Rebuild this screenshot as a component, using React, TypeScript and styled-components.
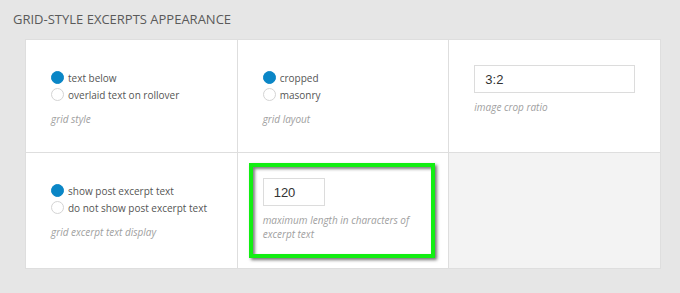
import React from "react";
import styled, { createGlobalStyle } from "styled-components";

const Global = createGlobalStyle`
  html, body { margin: 0; padding: 0; background: #e6e6e6; }
  body { font-family: "Open Sans", "Liberation Sans", sans-serif; }
  * { box-sizing: border-box; }
`;

const Page = styled.div`
  width: 680px;
  height: 293px;
  background: #e6e6e6;
  padding: 11px 0 0 0;
`;

const Title = styled.h2`
  margin: 0 0 0 13px;
  font-size: 13px;
  line-height: 17px;
  font-weight: 400;
  color: #5a5a5a;
  text-transform: uppercase;
`;

const Grid = styled.div`
  margin: 11px 0 0 25px;
  width: 636px;
  display: grid;
  grid-template-columns: repeat(3, minmax(0, 1fr));
  grid-template-rows: 112px 115px;
  gap: 1px;
  background: #dedede;
  border: 1px solid #dedede;
`;

const Cell = styled.div<{ $empty?: boolean }>`
  position: relative;
  background: ${(p) => (p.$empty ? "#f3f3f3" : "#fff")};
  padding: 25px 25px 0 25px;
  display: flex;
  flex-direction: column;
`;

const RadioGroup = styled.div`
  padding-top: 4px;
  display: flex;
  flex-direction: column;
`;

const RadioRow = styled.label`
  display: flex;
  align-items: center;
  gap: 4px;
  height: 17px;
  font-size: 10px;
  color: #555;
  white-space: nowrap;
`;

const Dot = styled.span<{ $on?: boolean }>`
  width: 13px;
  height: 13px;
  border-radius: 50%;
  flex: none;
  background: ${(p) => (p.$on ? "#0a86c6" : "#fff")};
  border: 1px solid ${(p) => (p.$on ? "#0a86c6" : "#d4d4d4")};
`;

const Hint = styled.div<{ $gap: number }>`
  margin-top: ${(p) => p.$gap}px;
  font-size: 10px;
  line-height: 14px;
  font-style: italic;
  color: #a0a0a0;
`;

const TextInput = styled.div<{ $w?: number }>`
  width: ${(p) => (p.$w ? `${p.$w}px` : "100%")};
  height: 28px;
  border: 1px solid #dcdcdc;
  background: #fff;
  padding: 0 10px;
  display: flex;
  align-items: center;
  font-family: "Liberation Sans", Arial, sans-serif;
  font-size: 13px;
  color: #333;
`;

const Highlight = styled.div`
  position: absolute;
  left: 11px;
  top: 10px;
  right: 13px;
  bottom: 10px;
  border: 4px solid #12ee12;
  box-shadow: 2px 2px 3px rgba(0, 0, 0, 0.55), inset 2px 2px 3px rgba(0, 0, 0, 0.5);
  pointer-events: none;
`;

const Radios = ({ options, label }: { options: string[]; label: string }) => (
  <>
    <RadioGroup>
      {options.map((o, i) => (
        <RadioRow key={o}>
          <Dot $on={i === 0} />
          {o}
        </RadioRow>
      ))}
    </RadioGroup>
    <Hint $gap={9}>{label}</Hint>
  </>
);

export default function App() {
  return (
    <Page>
      <Global />
      <Title>Grid-Style Excerpts Appearance</Title>
      <Grid>
        <Cell>
          <Radios options={["text below", "overlaid text on rollover"]} label="grid style" />
        </Cell>
        <Cell>
          <Radios options={["cropped", "masonry"]} label="grid layout" />
        </Cell>
        <Cell>
          <TextInput>3:2</TextInput>
          <Hint $gap={7}>image crop ratio</Hint>
        </Cell>
        <Cell>
          <Radios
            options={["show post excerpt text", "do not show post excerpt text"]}
            label="grid excerpt text display"
          />
        </Cell>
        <Cell>
          <TextInput $w={62}>120</TextInput>
          <Hint $gap={7}>maximum length in characters of excerpt text</Hint>
          <Highlight />
        </Cell>
        <Cell $empty />
      </Grid>
    </Page>
  );
}
